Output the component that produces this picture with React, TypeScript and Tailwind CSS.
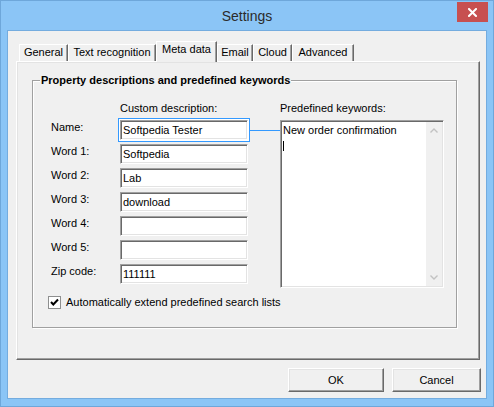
import React from "react";

const sunken =
  "border border-t-[#a0a0a0] border-l-[#a0a0a0] border-r-white border-b-white shadow-[inset_1px_1px_0_#696969,inset_-1px_-1px_0_#e3e3e3]";
const raised =
  "border border-t-white border-l-white border-r-[#696969] border-b-[#696969] shadow-[inset_-1px_-1px_0_#a0a0a0,inset_1px_1px_0_#e3e3e3]";

const tabs: { label: string; w: number; sel?: boolean }[] = [
  { label: "General", w: 49 },
  { label: "Text recognition", w: 88 },
  { label: "Meta data", w: 61, sel: true },
  { label: "Email", w: 36 },
  { label: "Cloud", w: 39 },
  { label: "Advanced", w: 62 },
];

const rows: { label: string; value: string }[] = [
  { label: "Word 1:", value: "Softpedia" },
  { label: "Word 2:", value: "Lab" },
  { label: "Word 3:", value: "download" },
  { label: "Word 4:", value: "" },
  { label: "Word 5:", value: "" },
  { label: "Zip code:", value: "111111" },
];

function Field({ value }: { value: string }) {
  return (
    <div className={`w-[128px] h-[20px] bg-white flex items-center pl-[2px] ${sunken}`}>
      {value}
    </div>
  );
}

export default function App() {
  return (
    <div className="w-[494px] h-[407px] bg-[#8bc5f6] border border-[#6ea7da] flex flex-col font-['Liberation_Sans',Arial,sans-serif] text-[11px] leading-[13px] text-black">
      {/* title bar */}
      <div className="h-[29px] grid grid-cols-[1fr_auto_1fr]">
        <div />
        <div className="self-center text-[14px] leading-[16px] text-[#2b2b2b]">Settings</div>
        <div className="flex justify-end items-start pt-px pr-[5px]">
          <div className="w-[31px] h-[20px] bg-[#c75050] flex items-center justify-center">
            <svg width="9" height="9" viewBox="0 0 9 9">
              <path d="M1 1 L8 8 M8 1 L1 8" stroke="#fff" strokeWidth="2" strokeLinecap="square" />
            </svg>
          </div>
        </div>
      </div>

      {/* client */}
      <div className="mx-[6px] h-[369px] border border-[#74acdf] bg-[#f0f0f0] flex flex-col pt-[10px] pl-[8px] pr-[6px]">
        {/* tabs */}
        <div className="h-[20px] flex items-end pl-[3px]">
          {tabs.map((t) =>
            t.sel ? (
              <div
                key={t.label}
                style={{ width: t.w }}
                className="relative z-10 h-[21px] -mb-px bg-[#f0f0f0] border-t border-l border-t-white border-l-white border-r border-r-[#696969] shadow-[inset_-1px_0_0_#a0a0a0] flex justify-center pt-[1px]"
              >
                {t.label}
              </div>
            ) : (
              <div
                key={t.label}
                style={{ width: t.w }}
                className="h-[17px] border-t border-l border-t-white border-l-white border-r border-r-[#696969] shadow-[inset_-1px_0_0_#a0a0a0] flex justify-center pt-[1px]"
              >
                {t.label}
              </div>
            )
          )}
        </div>

        {/* panel */}
        <div className={`h-[299px] ${raised} pt-[18px] pl-[15px]`}>
          <div className="relative w-[425px] h-[248px] border border-[#a0a0a0] shadow-[inset_1px_1px_0_#fff,1px_1px_0_#fff]">
            <div className="absolute -top-[7px] left-[7px] px-px bg-[#f0f0f0] font-bold">
              Property descriptions and predefined keywords
            </div>

            <div className="pt-[21px] pl-[15px]">
              <div className="flex items-start">
                {/* left column */}
                <div className="flex flex-col">
                  <div className="flex">
                    <div className="w-[70px]" />
                    <div className="pl-[2px]">Custom description:</div>
                  </div>
                  <div className="flex mt-[3px]">
                    <div className="w-[70px] pl-[3px] pt-[3px]">Name:</div>
                    <div className="border border-[#3399ff] p-px bg-white">
                      <Field value="Softpedia Tester" />
                    </div>
                  </div>
                  {rows.map((r, i) => (
                    <div key={r.label} className={`flex ${i === 0 ? "mt-[2px]" : "mt-[4px]"}`}>
                      <div className="w-[70px] pl-[3px] pt-px">{r.label}</div>
                      <div className="ml-[2px]">
                        <Field value={r.value} />
                      </div>
                    </div>
                  ))}
                </div>

                {/* connector */}
                <div className="w-[30px] mt-[28px] h-px bg-[#3399ff]" />

                {/* right column */}
                <div className="flex flex-col">
                  <div>Predefined keywords:</div>
                  <div className={`mt-[5px] w-[164px] h-[168px] bg-white flex ${sunken}`}>
                    <div className="flex-1 pl-[2px] pt-[3px] flex flex-col">
                      <div>New order confirmation</div>
                      <div className="mt-[4px] w-px h-[10px] bg-black" />
                    </div>
                    <div className="w-[16px] mr-px my-px bg-[#f0f0f0] flex flex-col justify-between">
                      <div className="h-[17px] flex items-center justify-center">
                        <svg width="8" height="5" viewBox="0 0 8 5">
                          <path d="M0.5 4.5 L4 1 L7.5 4.5" fill="none" stroke="#c2c2c2" strokeWidth="1.4" />
                        </svg>
                      </div>
                      <div className="h-[17px] flex items-center justify-center">
                        <svg width="8" height="5" viewBox="0 0 8 5">
                          <path d="M0.5 0.5 L4 4 L7.5 0.5" fill="none" stroke="#c2c2c2" strokeWidth="1.4" />
                        </svg>
                      </div>
                    </div>
                  </div>
                </div>
              </div>

              {/* checkbox */}
              <div className="mt-[8px] flex items-center gap-[5px]">
                <div className="w-[13px] h-[13px] bg-white border border-[#8e8f8f] flex items-center justify-center">
                  <svg width="11" height="11" viewBox="0 0 11 11">
                    <path d="M2 5 L4.3 7.5 L9 2.5" fill="none" stroke="#000" strokeWidth="2" />
                  </svg>
                </div>
                <div>Automatically extend predefined search lists</div>
              </div>
            </div>
          </div>
        </div>

        {/* buttons */}
        <div className="mt-[8px] flex justify-end gap-[8px] -mr-px">
          <div className={`w-[96px] h-[24px] bg-[#f0f0f0] flex items-center justify-center ${raised}`}>OK</div>
          <div className={`w-[89px] h-[24px] bg-[#f0f0f0] flex items-center justify-center ${raised}`}>Cancel</div>
        </div>
      </div>
    </div>
  );
}
